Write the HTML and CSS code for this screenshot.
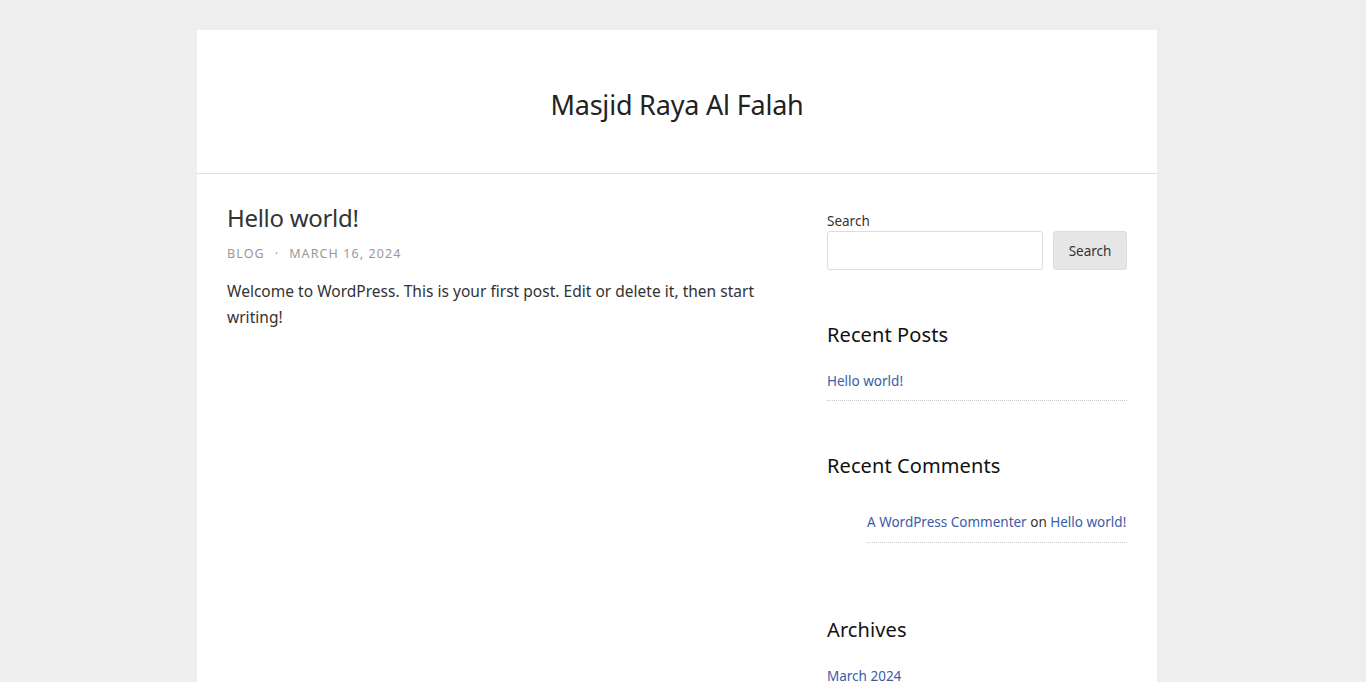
FILE: index.html
```html
<!DOCTYPE html>
<html lang="en">
<head>
<meta charset="utf-8">
<title>Masjid Raya Al Falah</title>
<link rel="stylesheet" href="styles.css">
</head>
<body>
<div class="page">
  <header class="site-header">
    <p class="site-title">Masjid Raya Al Falah</p>
  </header>
  <div class="content">
    <main class="main">
      <article class="post">
        <h1 class="post-title">Hello world!</h1>
        <div class="post-meta"><span>Blog</span><span class="sep">·</span><span>March 16, 2024</span></div>
        <p class="post-text">Welcome to WordPress. This is your first post. Edit or delete it, then start writing!</p>
      </article>
    </main>
    <aside class="sidebar">
      <section class="widget widget-search">
        <label class="search-label">Search</label>
        <div class="search-row">
          <input class="search-input" type="text">
          <button class="search-btn">Search</button>
        </div>
      </section>
      <section class="widget widget-posts">
        <h2 class="widget-title">Recent Posts</h2>
        <ul class="widget-list">
          <li><a href="#">Hello world!</a></li>
        </ul>
      </section>
      <section class="widget widget-comments">
        <h2 class="widget-title">Recent Comments</h2>
        <ul class="widget-list comments">
          <li><a href="#">A WordPress Commenter</a> on <a href="#">Hello world!</a></li>
        </ul>
      </section>
      <section class="widget">
        <h2 class="widget-title">Archives</h2>
        <ul class="widget-list">
          <li><a href="#">March 2024</a></li>
        </ul>
      </section>
    </aside>
  </div>
</div>
</body>
</html>
```

FILE: styles.css
```css
* { box-sizing: border-box; }
html, body { margin: 0; padding: 0; }
body {
  background: #eeeeee;
  font-family: "Noto Sans", "Open Sans", sans-serif;
  color: #333;
  padding: 30px 12px 0 0;
}
.page {
  width: 960px;
  margin: 0 auto;
  background: #fff;
  min-height: 700px;
}
.site-header {
  height: 144px;
  padding-top: 6px;
  border-bottom: 1px solid #ddd;
  display: flex;
  align-items: center;
  justify-content: center;
}
.site-title {
  margin: 0;
  font-size: 27px;
  font-weight: 400;
  color: #222;
  letter-spacing: -0.2px;
}
.content {
  display: flex;
  padding: 29px 30px 0 30px;
  gap: 42px;
}
.main { flex: 1; }
.post-title {
  margin: 0;
  font-size: 24px;
  font-weight: 400;
  line-height: 30px;
  color: #333;
  letter-spacing: -0.3px;
}
.post-meta {
  margin-top: 13px;
  font-size: 12.5px;
  line-height: 16px;
  text-transform: uppercase;
  letter-spacing: 1.1px;
  color: #999;
}
.post-meta .sep { margin: 0 10px; }
.post-text {
  margin: 16px 0 0;
  font-size: 15.5px;
  line-height: 26px;
  color: #333;
  letter-spacing: 0.02px;
}
.sidebar { width: 300px; flex: none; padding-top: 9px; }
.widget { margin-bottom: 50px; }
.widget-search { margin-bottom: 51px; }
.widget-posts { margin-bottom: 51px; }
.widget-comments { margin-bottom: 73px; }
.search-label {
  display: block;
  font-size: 13.5px;
  line-height: 18px;
  color: #333;
  margin-bottom: 1px;
}
.search-row { display: flex; gap: 10px; }
.search-input {
  width: 216px;
  height: 39px;
  border: 1px solid #ddd;
  border-radius: 3px;
  background: #fff;
}
.search-btn {
  width: 74px;
  height: 39px;
  border: 1px solid #ddd;
  border-radius: 3px;
  background: #e6e6e6;
  color: #333;
  font-family: inherit;
  font-size: 13.5px;
}
.widget-title {
  margin: 0 0 16px;
  font-size: 20px;
  font-weight: 400;
  line-height: 28px;
  color: #111;
  letter-spacing: 0.1px;
}
.widget-list { list-style: none; margin: 0; padding: 0; }
.widget-list li {
  font-size: 13.5px;
  line-height: 20px;
  padding: 6px 0 9px;
  border-bottom: 1px dotted #ccc;
  color: #333;
}
.widget-list a { color: #3a5ca8; text-decoration: none; }
.comments { margin-left: 40px; padding-top: 10px; }
.comments li { padding-bottom: 10px; }
```
